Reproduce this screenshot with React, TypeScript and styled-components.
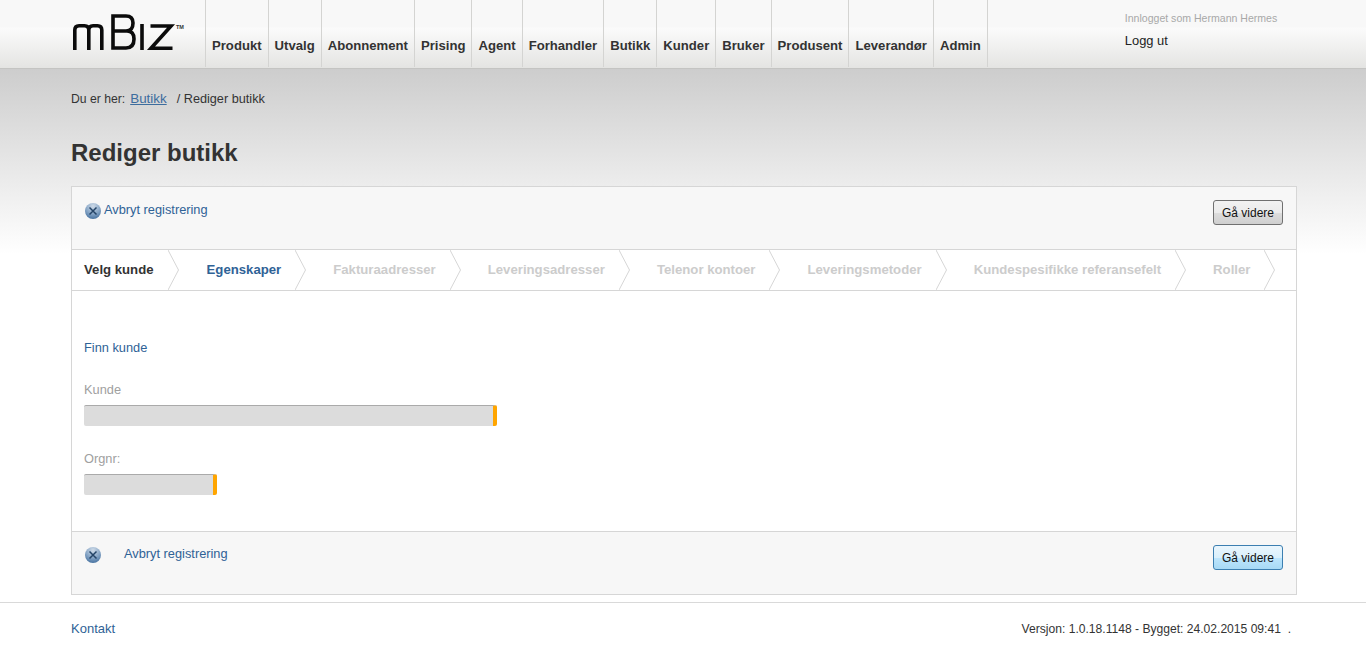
import React from 'react';
import styled, { createGlobalStyle } from 'styled-components';

const GlobalStyle = createGlobalStyle`
  html, body {
    margin: 0;
    padding: 0;
    background: #fff;
    font-family: "Liberation Sans", Arial, sans-serif;
    font-size: 12.8px;
    color: #333;
  }
`;

const Header = styled.header`
  height: 68px;
  display: flex;
  padding-left: 71px;
  border-bottom: 1px solid #c4c4c2;
  background: linear-gradient(to bottom, #f8f8f8 0, #f8f8f8 27px, #fbfbfb 28px, #e4e4e2 68px);
`;

const LogoBox = styled.div`
  width: 134px;
  padding-top: 14px;
`;

const Nav = styled.nav`
  display: flex;
  border-left: 1px solid #d4d4d2;
  height: 67px;
`;

const NavItem = styled.a`
  display: flex;
  align-items: flex-end;
  padding: 0 6px 14px 6px;
  border-right: 1px solid #d4d4d2;
  font-size: 13.13px;
  line-height: 15px;
  font-weight: bold;
  color: #333;
`;

const UserBox = styled.div`
  margin-left: 137px;
  padding-top: 12px;
`;

const UserName = styled.div`
  font-size: 10.55px;
  line-height: 13px;
  color: #a8a8a8;
`;

const Logout = styled.a`
  display: block;
  margin-top: 9px;
  font-size: 12.9px;
  line-height: 14px;
  color: #222;
`;

const Main = styled.main`
  padding: 22px 69px 7px 71px;
  height: 533px;
  box-sizing: border-box;
  background: linear-gradient(to bottom, #cdcdcd 0, #ffffff 185px);
`;

const Breadcrumb = styled.div`
  display: flex;
  align-items: baseline;
  height: 15px;
  line-height: 15px;
  font-size: 12.2px;
  color: #333;
`;

const CrumbLink = styled.a`
  margin: 0 10px 0 5px;
  font-size: 13.4px;
  color: #3d6d9e;
  text-decoration: underline;
`;

const CrumbCurrent = styled.span`
  font-size: 12.7px;
`;

const Title = styled.h1`
  margin: 33px 0 19px;
  font-size: 24px;
  line-height: 28px;
  font-weight: bold;
  color: #333;
`;

const Panel = styled.section`
  border: 1px solid #d6d6d6;
  background: #fff;
`;

const ActionBar = styled.div<{ $height: number; $top: number }>`
  height: ${(p) => p.$height}px;
  box-sizing: border-box;
  padding: ${(p) => p.$top}px 13px 0 13px;
  display: flex;
  justify-content: space-between;
  align-items: flex-start;
  background: #f7f7f7;
`;

const CancelLink = styled.a<{ $gap: number }>`
  display: flex;
  align-items: flex-start;
  gap: ${(p) => p.$gap}px;
  padding-top: 2px;
  line-height: 14px;
  color: #2f6296;
`;

const CancelIconSvg = styled.svg`
  display: block;
  flex: none;
`;

const NextButton = styled.button<{ $active?: boolean }>`
  width: 70px;
  height: 25px;
  margin-top: ${(p) => (p.$active ? '0' : '-1px')};
  padding: 0;
  border-radius: 3px;
  border: 1px solid ${(p) => (p.$active ? '#3c7fb1' : '#707070')};
  background: ${(p) =>
    p.$active
      ? 'linear-gradient(to bottom, #eaf6fd 0, #d9f0fc 50%, #bee6fd 50%, #a7d9f5 100%)'
      : 'linear-gradient(to bottom, #f2f2f2 0, #ebebeb 50%, #dddddd 50%, #cfcfcf 100%)'};
  font-family: "Liberation Sans", Arial, sans-serif;
  font-size: 12px;
  color: #111;
`;

const Steps = styled.div`
  display: flex;
  height: 40px;
  border-top: 1px solid #d6d6d6;
  border-bottom: 1px solid #d6d6d6;
`;

const Step = styled.div<{ $state: 'current' | 'next' | 'off'; $first?: boolean }>`
  position: relative;
  padding: 0 25px 0 ${(p) => (p.$first ? '12px' : '27px')};
  margin-right: ${(p) => (p.$first ? '1px' : '0')};
  line-height: 40px;
  font-size: 13.18px;
  font-weight: bold;
  white-space: nowrap;
  color: ${(p) => (p.$state === 'current' ? '#333' : p.$state === 'next' ? '#2f6296' : '#cccccc')};
`;

const Chevron = styled.svg`
  position: absolute;
  top: 0;
  right: 0;
`;

const FormBody = styled.div`
  height: 241px;
  box-sizing: border-box;
  padding: 50px 12px 0;
  border-bottom: 1px solid #d6d6d6;
`;

const SectionLink = styled.a`
  display: block;
  line-height: 14px;
  color: #2f6296;
`;

const Field = styled.div<{ $top: number }>`
  margin-top: ${(p) => p.$top}px;
`;

const FieldLabel = styled.label`
  display: block;
  line-height: 14px;
  margin-bottom: 8px;
  color: #a0a0a0;
`;

const ReadonlyInput = styled.div<{ $width: number }>`
  width: ${(p) => p.$width}px;
  height: 21px;
  box-sizing: border-box;
  border-top: 1px solid #aaa;
  border-right: 4px solid #ffa500;
  border-radius: 2px;
  background: #dcdcdc;
`;

const Footer = styled.footer`
  height: 51px;
  box-sizing: border-box;
  border-top: 1px solid #d9d9d9;
  padding: 19px 75px 0 71px;
  display: flex;
  justify-content: space-between;
  line-height: 14px;
`;

const FooterLink = styled.a`
  font-size: 13px;
  color: #2f6296;
`;

const Version = styled.span`
  font-size: 12.1px;
  color: #333;
`;

const navItems = [
  'Produkt',
  'Utvalg',
  'Abonnement',
  'Prising',
  'Agent',
  'Forhandler',
  'Butikk',
  'Kunder',
  'Bruker',
  'Produsent',
  'Leverandør',
  'Admin',
];

const steps = [
  { label: 'Velg kunde', state: 'current' },
  { label: 'Egenskaper', state: 'next' },
  { label: 'Fakturaadresser', state: 'off' },
  { label: 'Leveringsadresser', state: 'off' },
  { label: 'Telenor kontoer', state: 'off' },
  { label: 'Leveringsmetoder', state: 'off' },
  { label: 'Kundespesifikke referansefelt', state: 'off' },
  { label: 'Roller', state: 'off' },
] as const;

const Logo = () => (
  <svg width="114" height="38" viewBox="0 0 114 38" fill="none">
    <g stroke="#0b0b0b" strokeWidth="3.6">
      <path d="M3.800 36V16q0-4.300 4.300-4.300h5.400q4.300 0 4.300 4.300V36M17.800 16q0-4.300 4.300-4.300h4.400q4.300 0 4.300 4.300V36" />
      <path d="M42 2h13q7 0 7 7 0 8-7 8H42h14q7 0 7 8 0 9-8 9H42z" />
      <path d="M71 10v26" />
      <path d="M79.500 12H100L80 34.200h21.500" />
    </g>
    <text x="105" y="15" fontFamily="Liberation Sans, sans-serif" fontSize="5.500" fontWeight="bold" fill="#333">
      TM
    </text>
  </svg>
);

const CancelIcon = ({ id }: { id: string }) => (
  <CancelIconSvg width="16" height="16" viewBox="0 0 16 16">
    <defs>
      <radialGradient id={id} cx="50%" cy="20%" r="85%">
        <stop offset="0" stopColor="#cfdbe8" />
        <stop offset="0.55" stopColor="#86a5c6" />
        <stop offset="1" stopColor="#3f6c9c" />
      </radialGradient>
    </defs>
    <circle cx="8" cy="8" r="8" fill={`url(#${id})`} />
    <path d="M4.500 4.500l7 7M11.500 4.500l-7 7" stroke="#254568" strokeWidth="1.500" />
  </CancelIconSvg>
);

export default function App() {
  return (
    <>
      <GlobalStyle />
      <Header>
        <LogoBox>
          <Logo />
        </LogoBox>
        <Nav>
          {navItems.map((item) => (
            <NavItem key={item}>{item}</NavItem>
          ))}
        </Nav>
        <UserBox>
          <UserName>Innlogget som Hermann Hermes</UserName>
          <Logout>Logg ut</Logout>
        </UserBox>
      </Header>
      <Main>
        <Breadcrumb>
          Du er her:
          <CrumbLink>Butikk</CrumbLink>
          <CrumbCurrent>/ Rediger butikk</CrumbCurrent>
        </Breadcrumb>
        <Title>Rediger butikk</Title>
        <Panel>
          <ActionBar $height={62} $top={14}>
            <CancelLink $gap={3}>
              <CancelIcon id="cancel-top" />
              Avbryt registrering
            </CancelLink>
            <NextButton>Gå videre</NextButton>
          </ActionBar>
          <Steps>
            {steps.map((step, i) => (
              <Step key={step.label} $state={step.state} $first={i === 0}>
                {step.label}
                <Chevron width="11" height="40" viewBox="0 0 11 40" fill="none">
                  <path d="M0 0L10.500 20L0 40" stroke="#d6d6d6" />
                </Chevron>
              </Step>
            ))}
          </Steps>
          <FormBody>
            <SectionLink>Finn kunde</SectionLink>
            <Field $top={28}>
              <FieldLabel>Kunde</FieldLabel>
              <ReadonlyInput $width={413} />
            </Field>
            <Field $top={26}>
              <FieldLabel>Orgnr:</FieldLabel>
              <ReadonlyInput $width={133} />
            </Field>
          </FormBody>
          <ActionBar $height={62} $top={13}>
            <CancelLink $gap={23}>
              <CancelIcon id="cancel-bottom" />
              Avbryt registrering
            </CancelLink>
            <NextButton $active>Gå videre</NextButton>
          </ActionBar>
        </Panel>
      </Main>
      <Footer>
        <FooterLink>Kontakt</FooterLink>
        <Version>Versjon: 1.0.18.1148 - Bygget: 24.02.2015 09:41 &nbsp;.</Version>
      </Footer>
    </>
  );
}
